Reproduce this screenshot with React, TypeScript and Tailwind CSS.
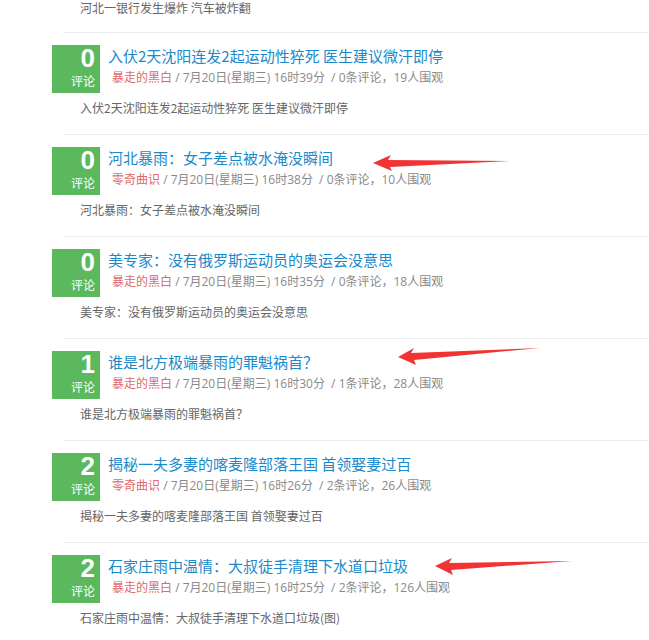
import React from "react";

type Post = {
  count: number;
  title: string;
  author: string;
  time: string;
  views: number;
  summary: string;
};

const posts: Post[] = [
  {
    count: 0,
    title: "入伏2天沈阳连发2起运动性猝死 医生建议微汗即停",
    author: "暴走的黑白",
    time: "7月20日(星期三) 16时39分",
    views: 19,
    summary: "入伏2天沈阳连发2起运动性猝死 医生建议微汗即停",
  },
  {
    count: 0,
    title: "河北暴雨：女子差点被水淹没瞬间",
    author: "零奇曲识",
    time: "7月20日(星期三) 16时38分",
    views: 10,
    summary: "河北暴雨：女子差点被水淹没瞬间",
  },
  {
    count: 0,
    title: "美专家：没有俄罗斯运动员的奥运会没意思",
    author: "暴走的黑白",
    time: "7月20日(星期三) 16时35分",
    views: 18,
    summary: "美专家：没有俄罗斯运动员的奥运会没意思",
  },
  {
    count: 1,
    title: "谁是北方极端暴雨的罪魁祸首？",
    author: "暴走的黑白",
    time: "7月20日(星期三) 16时30分",
    views: 28,
    summary: "谁是北方极端暴雨的罪魁祸首？",
  },
  {
    count: 2,
    title: "揭秘一夫多妻的喀麦隆部落王国 首领娶妻过百",
    author: "零奇曲识",
    time: "7月20日(星期三) 16时26分",
    views: 26,
    summary: "揭秘一夫多妻的喀麦隆部落王国 首领娶妻过百",
  },
  {
    count: 2,
    title: "石家庄雨中温情：大叔徒手清理下水道口垃圾",
    author: "暴走的黑白",
    time: "7月20日(星期三) 16时25分",
    views: 126,
    summary: "石家庄雨中温情：大叔徒手清理下水道口垃圾(图)",
  },
];

// red annotation arrows drawn over the screenshot
const arrows = [
  "373,163 391,155 388,160 510,161 390,167 392,171",
  "398,357 414,348 411,353 540,348 414,360 416,365",
  "435,566 452,558 449,563 572,561 451,570 453,575",
];

function PostItem({ post }: { post: Post }) {
  return (
    <div>
      <div className="ml-3 h-px bg-[#ebebeb]" />
      <div className="pt-3 pb-[17px]">
        <div className="flex">
          <div className="flex h-12 w-12 shrink-0 flex-col items-end bg-[#5cb85c] pt-px pr-[5px] text-white">
            <span className="font-['Liberation_Sans',Arial,sans-serif] text-[26px] font-bold leading-[24px]">
              {post.count}
            </span>
            <span className="mt-[2px] text-[12px] leading-[18px]">评论</span>
          </div>
          <div className="ml-2 flex flex-col">
            <a href="#" className="text-[15px] leading-[22px] text-[#1a8acb]">
              {post.title}
            </a>
            <div className="mt-px ml-1 font-['Open_Sans','Noto_Sans_CJK_SC',sans-serif] text-[12px] leading-[20px] whitespace-pre text-[#8a8a8a]">
              <span className="text-[#de6a6a]">{post.author}</span>
              <span>{` / ${post.time}  / ${post.count}条评论，${post.views}人围观`}</span>
            </div>
          </div>
        </div>
        <p className="mt-[6px] ml-7 text-[12px] leading-[18px] text-[#666]">{post.summary}</p>
      </div>
    </div>
  );
}

export default function App() {
  return (
    <div className="relative h-[640px] w-[649px] overflow-hidden bg-white font-['Noto_Sans_CJK_SC','Noto_Sans',sans-serif]">
      <div className="pl-[52px]">
        <div className="h-8">
          <p className="ml-7 text-[12px] leading-[16px] text-[#666]">河北一银行发生爆炸 汽车被炸翻</p>
        </div>
        {posts.map((p, i) => (
          <PostItem key={i} post={p} />
        ))}
      </div>
      <svg className="pointer-events-none absolute inset-0" width="649" height="640" viewBox="0 0 649 640">
        {arrows.map((pts, i) => (
          <polygon key={i} points={pts} fill="#f23333" />
        ))}
      </svg>
    </div>
  );
}
